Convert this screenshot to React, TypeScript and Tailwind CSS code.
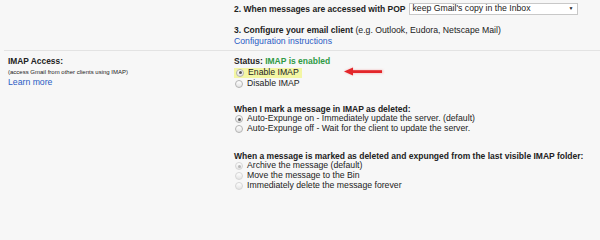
function Radio({ checked = false, disabled = false }: { checked?: boolean; disabled?: boolean }) {
  return (
    <span
      className={`mr-[4px] flex h-[8px] w-[8px] shrink-0 items-center justify-center rounded-full border bg-gradient-to-b from-[#ffffff] to-[#e4e4e4] ${
        disabled ? "border-[#d6d6d6]" : "border-[#b4b4b4]"
      }`}
    >
      {checked && (
        <span className={`h-[3px] w-[3px] rounded-full ${disabled ? "bg-[#b8b8b8]" : "bg-[#555]"}`} />
      )}
    </span>
  );
}

function Option({ label, checked, disabled }: { label: string; checked?: boolean; disabled?: boolean }) {
  return (
    <div className="flex h-[10px] items-center pl-[1px]">
      <Radio checked={checked} disabled={disabled} />
      <span>{label}</span>
    </div>
  );
}

export default function App() {
  return (
    <div className="min-h-screen bg-[#f7f7f7]">
      <div className="relative h-[202px] w-[600px] overflow-hidden font-['Liberation_Sans',Arial,sans-serif] text-[8.7px] text-[#222]">
        {/* POP / client settings */}
        <div className="flex pb-[4px] pl-[8px] pt-[3px]">
          <div className="w-[226px] shrink-0" />
          <div>
            <div className="flex h-[12px] items-center">
              <span className="text-[8.5px] font-bold">2. When messages are accessed with POP</span>
              <div className="ml-[3px] flex h-[12px] w-[169px] items-center justify-between border border-[#c8c8c8] bg-white pl-[3px] pr-[3px]">
                <span>keep Gmail's copy in the Inbox</span>
                <span className="text-[5px]">▼</span>
              </div>
            </div>
            <div className="mt-[10px] h-[11px] leading-[11px]">
              <span className="text-[8.5px] font-bold">3. Configure your email client</span> (e.g. Outlook, Eudora, Netscape Mail)
            </div>
            <div className="h-[10px] leading-[10px] text-[#2a5bc4]">Configuration instructions</div>
          </div>
        </div>

        <div className="ml-[4px] border-t border-[#e3e3e3]" />

        {/* IMAP access */}
        <div className="flex pl-[8px] pt-[5px]">
          <div className="w-[226px] shrink-0">
            <div className="h-[11px] text-[8.4px] leading-[11px] font-bold">IMAP Access:</div>
            <div className="h-[10px] text-[6px] leading-[10px]">(access Gmail from other clients using IMAP)</div>
            <div className="h-[10px] leading-[10px] text-[#2a5bc4]">Learn more</div>
          </div>
          <div>
            <div className="h-[11px] text-[8.5px] leading-[11px] font-bold">
              Status: <span className="text-[#2f9a45]">IMAP is enabled</span>
            </div>
            <div className="flex h-[11px] items-center">
              <div className="flex h-[10px] items-center bg-[#f3f6a4] pl-[2px] pr-[3px]">
                <Radio checked />
                <span>Enable IMAP</span>
              </div>
            </div>
            <div className="flex h-[11px] items-center pl-[1px]">
              <Radio />
              <span>Disable IMAP</span>
            </div>

            <div className="mt-[15px] h-[10px] text-[8.5px] leading-[10px] font-bold">
              When I mark a message in IMAP as deleted:
            </div>
            <Option label="Auto-Expunge on - Immediately update the server. (default)" checked />
            <Option label="Auto-Expunge off - Wait for the client to update the server." />

            <div className="mt-[17px] h-[10px] text-[8.5px] leading-[10px] font-bold">
              When a message is marked as deleted and expunged from the last visible IMAP folder:
            </div>
            <Option label="Archive the message (default)" checked disabled />
            <Option label="Move the message to the Bin" disabled />
            <Option label="Immediately delete the message forever" disabled />
          </div>
        </div>

        {/* annotation arrow */}
        <svg className="absolute left-[343px] top-[66px]" width="42" height="11" viewBox="0 0 42 11">
          <defs>
            <filter id="glow" x="-20%" y="-50%" width="140%" height="200%">
              <feGaussianBlur stdDeviation="0.8" />
            </filter>
          </defs>
          <g fill="#f08080" opacity="0.5" filter="url(#glow)">
            <polygon points="1,5.5 10,1.5 10,9.5" />
            <rect x="9" y="4" width="31" height="3.4" />
          </g>
          <polygon points="1,5.5 10,1.5 10,9.5" fill="#e3262a" />
          <rect x="9" y="4.2" width="30" height="2.8" fill="#e3262a" />
        </svg>
      </div>
    </div>
  );
}
